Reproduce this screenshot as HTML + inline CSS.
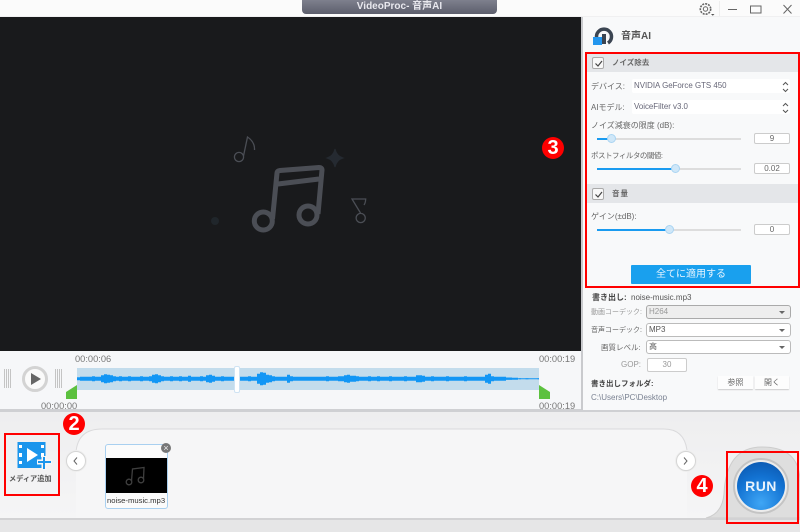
<!DOCTYPE html>
<html lang="ja"><head><meta charset="utf-8"><style>
html,body{margin:0;padding:0}
body{width:800px;height:532px;position:relative;overflow:hidden;background:#f0f0f1;font-family:"Liberation Sans","Noto Sans CJK JP",sans-serif;color:#555}
.a{position:absolute;white-space:nowrap}
.t{position:absolute;white-space:nowrap;font-size:8px;line-height:10px;color:#666}
.tm{position:absolute;white-space:nowrap;font-size:9.3px;line-height:10px;color:#777}
.sel{position:absolute;left:632px;width:158px;height:14px;background:#fff;border-radius:2px;font-size:7.9px;line-height:14px;color:#667;text-indent:2px}
.trk{position:absolute;left:597px;width:144px;height:2px;background:#ddd}
.fill{position:absolute;left:597px;height:2px;background:#1a9bf0}
.kn{position:absolute;width:7px;height:7px;border-radius:50%;background:#cfe7f8;border:1px solid #a9d4f2}
.val{position:absolute;left:754px;width:34px;height:9px;border:1px solid #ccc;border-radius:2px;background:#fff;font-size:8px;line-height:9px;text-align:center;color:#666}
.hd{position:absolute;left:587px;width:211px;height:19px;background:#e4e6e9}
.cb{position:absolute;left:592px;width:10px;height:10px;border:1px solid #aaa;border-radius:2px;background:#f8f8f8}
.dd{position:absolute;left:646px;width:143px;height:12px;border:1px solid #bbb;border-radius:3px;background:#fff;font-size:8px;line-height:12px;text-indent:2px;color:#555}
.dd:after{content:"";position:absolute;right:5px;top:5px;border:3px solid transparent;border-top:3px solid #666;border-bottom:0}
.red{position:absolute;border:2px solid #f00;box-sizing:border-box}
.num{position:absolute;width:22px;height:22px;border-radius:50%;background:#f00;color:#fff;font-weight:bold;font-size:20px;line-height:22px;text-align:center}
.gr{position:absolute;width:8px;height:19px;background-image:linear-gradient(90deg,#c4c4c4 1px,transparent 1px),linear-gradient(#f6f7f9 1px,transparent 1px);background-size:2px 2px}
</style></head><body>
<!-- top bar -->
<div class="a" style="left:0;top:0;width:800px;height:16px;background:#fbfbfb"></div>
<div class="a" style="left:302px;top:0;width:195px;height:14px;background:linear-gradient(#7e808d,#5c5e6c);border-radius:0 0 4px 4px;color:#e8e8ee;font-weight:bold;font-size:10px;line-height:14px;text-align:center">VideoProc- 音声AI</div>
<svg class="a" style="left:698px;top:1px" width="102" height="15" viewBox="0 0 102 15" fill="none" stroke="#666">
<circle cx="7.5" cy="8" r="2.2"/><circle cx="7.5" cy="8" r="5.2" stroke-dasharray="2 1" stroke-width="1.6"/><path d="M13 13h3.500l-1.700 1.700z" fill="#555" stroke="none"/>
<path d="M21.500 0v15" stroke="#eee"/>
<path d="M30 8.500h9" stroke-width="1"/><rect x="52.500" y="5" width="10.500" height="7"/><path d="M85.500 4l8 8.500M93.500 4l-8 8.500"/>
</svg>
<!-- video -->
<div class="a" style="left:0;top:17px;width:581px;height:334px;background:#191a1c"></div>
<svg class="a" style="left:200px;top:120px" width="190" height="130" viewBox="0 0 190 130" fill="none" stroke="#4b4e55">
<g stroke-width="5"><circle cx="63.300" cy="101" r="9"/><circle cx="108" cy="95" r="9"/><path d="M72.500 99L77 53Q77 51 80 50.500L119 47.500Q122 47.500 122 50L118 94M78 64L119 59"/></g>
<g stroke-width="1.300"><circle cx="39" cy="37" r="4.600"/><path d="M43.500 36L47.500 17Q55 22 54.500 30"/><circle cx="160.700" cy="98" r="4.600"/><path d="M160.500 93L152 79H165.700Q165.500 83 164 85"/></g>
<path d="M135 29Q136.500 36 143 38Q136.500 40 135 47Q133.500 40 127 38Q133.500 36 135 29Z" fill="#252a31" stroke="#252a31" stroke-width="1"/><circle cx="15" cy="101" r="4" fill="#20262b" stroke="none"/>
</svg>
<!-- timeline -->
<div class="a" style="left:0;top:351px;width:581px;height:58px;background:#f6f7f9"></div>
<div class="gr" style="left:4px;top:369px"></div>
<div class="gr" style="left:55px;top:369px"></div>
<div class="a" style="left:22px;top:366px;width:20px;height:20px;border:3px solid #d3d3d3;border-radius:50%;background:#fafafa"></div>
<div class="a" style="left:31px;top:373px;border-left:10px solid #666;border-top:6px solid transparent;border-bottom:6px solid transparent"></div>
<div class="tm" style="left:75px;top:354px">00:00:06</div>
<div class="tm" style="left:539px;top:354px">00:00:19</div>
<div class="tm" style="left:41px;top:401px">00:00:00</div>
<div class="tm" style="left:539px;top:401px">00:00:19</div>
<div class="a" style="left:77px;top:368px;width:462px;height:22px;background:#c3dcec"></div>
<svg class="a" style="left:77px;top:368px" width="462" height="22" viewBox="0 0 462 22"><path fill="none" stroke="#1296f5" stroke-width="3" d="M1.500 9.200v3M4.500 8.700v4M7.500 8.700v4M10.500 8.700v4M13.500 8.700v4M16.500 8.200v5M19.500 8.700v4M22.500 8.700v4M25.500 7.200v7M28.500 6.200v9M31.500 6.700v8M34.500 7.200v7M37.500 8.200v5M40.500 8.700v4M43.500 8.200v5M46.500 8.700v4M49.500 8.700v4M52.500 8.200v5M55.500 8.700v4M58.500 8.700v4M61.500 8.700v4M64.500 8.200v5M67.500 8.700v4M70.500 8.700v4M73.500 8.200v5M76.500 6.700v8M79.500 6.200v9M82.500 7.200v7M85.500 8.200v5M88.500 8.700v4M91.500 8.700v4M94.500 8.200v5M97.500 8.700v4M100.500 8.700v4M103.500 8.200v5M106.500 8.700v4M109.500 8.700v4M112.500 7.700v6M115.500 8.700v4M118.500 8.700v4M121.500 8.700v4M124.500 8.200v5M127.500 8.700v4M130.500 7.200v7M133.500 6.700v8M136.500 7.700v6M139.500 8.700v4M142.500 8.700v4M145.500 8.200v5M148.500 8.700v4M151.500 8.700v4M154.500 8.700v4M157.500 8.700v4M160.500 7.700v6M163.500 8.700v4M166.500 8.700v4M169.500 8.700v4M172.500 8.200v5M175.500 8.700v4M178.500 8.700v4M181.500 5.700v10M184.500 4.200v13M187.500 4.700v12M190.500 6.700v8M193.500 7.200v7M196.500 8.200v5M199.500 8.700v4M202.500 8.700v4M205.500 8.700v4M208.500 8.700v4M211.500 6.700v8M214.500 8.200v5M217.500 8.700v4M220.500 8.700v4M223.500 8.700v4M226.500 8.700v4M229.500 8.700v4M232.500 8.700v4M235.500 8.700v4M238.500 8.700v4M241.500 8.700v4M244.500 8.700v4M247.500 8.700v4M250.500 8.200v5M253.500 8.700v4M256.500 8.700v4M259.500 8.700v4M262.500 8.200v5M265.500 8.200v5M268.500 7.200v7M271.500 6.700v8M274.500 7.700v6M277.500 7.700v6M280.500 8.200v5M283.500 8.700v4M286.500 8.700v4M289.500 8.700v4M292.500 8.200v5M295.500 8.700v4M298.500 8.700v4M301.500 8.200v5M304.500 8.700v4M307.500 8.700v4M310.500 8.700v4M313.500 8.200v5M316.500 8.700v4M319.500 8.700v4M322.500 8.700v4M325.500 8.700v4M328.500 8.200v5M331.500 8.700v4M334.500 8.700v4M337.500 8.700v4M340.500 7.200v7M343.500 7.200v7M346.500 7.700v6M349.500 8.700v4M352.500 8.700v4M355.500 8.200v5M358.500 8.700v4M361.500 8.700v4M364.500 8.700v4M367.500 8.700v4M370.500 8.200v5M373.500 8.700v4M376.500 8.700v4M379.500 8.700v4M382.500 8.700v4M385.500 8.700v4M388.500 8.200v5M391.500 8.700v4M394.500 8.700v4M397.500 8.700v4M400.500 8.700v4M403.500 8.700v4M406.500 8.700v4M409.500 6.700v8M412.500 5.700v10M415.500 8.200v5M418.500 8.700v4M421.500 8.700v4M424.500 8.700v4M427.500 8.700v4M430.500 9.500v2.400M433.500 9.500v2.400M436.500 9.700v2M439.500 9.700v2M442.500 10.200v1M450 10.200v1M462 10.200v1"/><path d="M442 10.700h20" stroke="#1296f5" stroke-width="1"/></svg>
<div class="a" style="left:234px;top:366px;width:4px;height:25px;background:#fff;border:1px solid #cfe3f3;border-radius:2px"></div>
<svg class="a" style="left:66px;top:385px" width="484" height="15" viewBox="0 0 484 15"><path fill="#5cc13f" d="M0 14V7L11 0V14ZM473 0L484 7V14H473Z"/></svg>
<div class="a" style="left:0;top:409px;width:581px;height:2px;background:#cfd0d3"></div>
<!-- right panel -->
<div class="a" style="left:581px;top:17px;width:2px;height:393px;background:#c9cacd"></div>
<div class="a" style="left:583px;top:17px;width:217px;height:393px;background:#f8f9fa"></div>
<svg class="a" style="left:593px;top:26px" width="22" height="20" viewBox="0 0 22 20"><path fill="none" stroke="#3b4552" stroke-width="3.500" d="M7 17A7.500 7.500 0 1 1 15 17"/><path fill="#3b4552" d="M9 8h4v10H9z"/><rect x="0" y="11" width="9" height="8" fill="#2396ee"/></svg>
<div class="a" style="left:621px;top:30px;font-size:10px;font-weight:bold;line-height:13px;color:#555">音声AI</div>
<div class="hd" style="top:53px"></div>
<div class="cb" style="left:592px;top:57px"></div>
<svg class="a" style="left:595px;top:60px" width="8" height="7" viewBox="0 0 8 7"><path d="M0.500 3.500L3 6L7 1" fill="none" stroke="#444" stroke-width="1.200"/></svg>
<div class="t" style="left:612px;top:58px;font-weight:bold;font-size:7.5px">ノイズ除去</div>
<div class="t" style="left:591px;top:82px">デバイス:</div>
<div class="sel" style="top:79px">NVIDIA GeForce GTS 450</div>
<div class="t" style="left:591px;top:103px">AIモデル:</div>
<div class="sel" style="top:100px">VoiceFilter v3.0</div>
<svg class="a" style="left:782px;top:81px" width="7" height="32" viewBox="0 0 7 32" fill="none" stroke="#555"><path d="M1 4L3.500 1.500L6 4M1 8L3.500 10.500L6 8M1 25L3.500 22.500L6 25M1 29L3.500 31.500L6 29"/></svg>
<div class="t" style="left:591px;top:121px">ノイズ減衰の限度 (dB):</div>
<div class="trk" style="top:138px"></div><div class="fill" style="top:138px;width:14px"></div><div class="kn" style="left:607px;top:134px"></div>
<div class="val" style="top:133px">9</div>
<div class="t" style="left:591px;top:151px;font-size:7.5px;letter-spacing:-.5px">ポストフィルタの閾値:</div>
<div class="trk" style="top:168px"></div><div class="fill" style="top:168px;width:79px"></div><div class="kn" style="left:671px;top:164px"></div>
<div class="val" style="top:163px">0.02</div>
<div class="hd" style="top:184px"></div>
<div class="cb" style="left:592px;top:188px"></div>
<svg class="a" style="left:595px;top:191px" width="8" height="7" viewBox="0 0 8 7"><path d="M0.500 3.500L3 6L7 1" fill="none" stroke="#444" stroke-width="1.200"/></svg>
<div class="t" style="left:612px;top:189px;font-weight:bold;font-size:7.5px;letter-spacing:1px">音量</div>
<div class="t" style="left:591px;top:212px">ゲイン(±dB):</div>
<div class="trk" style="top:229px"></div><div class="fill" style="top:229px;width:72px"></div><div class="kn" style="left:665px;top:225px"></div>
<div class="val" style="top:224px">0</div>
<div class="a" style="left:631px;top:265px;width:120px;height:19px;background:#19a0ee;color:#e8f5ff;font-size:10px;line-height:19px;text-align:center;border-radius:1px">全てに適用する</div>
<div class="red" style="left:585px;top:52px;width:215px;height:236px"></div>
<div class="num" style="left:542px;top:137px">3</div>
<!-- export -->
<div class="t" style="left:592px;top:293px;font-weight:bold;color:#444">書き出し:</div>
<div class="t" style="left:631px;top:293px;color:#555">noise-music.mp3</div>
<div class="t" style="left:591px;top:308px;color:#999;font-size:7px">動画コーデック:</div>
<div class="dd" style="top:305px;background:#eee;color:#999;border-color:#aaa">H264</div>
<div class="t" style="left:591px;top:326px;font-size:7px">音声コーデック:</div>
<div class="dd" style="top:323px">MP3</div>
<div class="t" style="left:601px;top:343px;font-size:7.5px">画質レベル:</div>
<div class="dd" style="top:340px">高</div>
<div class="t" style="left:621px;top:360px;color:#999">GOP:</div>
<div class="a" style="left:647px;top:358px;width:38px;height:12px;border:1px solid #ccc;border-radius:2px;background:#fff;font-size:8px;line-height:12px;text-align:center;color:#999">30</div>
<div class="t" style="left:591px;top:379px;font-weight:bold;color:#444;font-size:7.5px">書き出しフォルダ:</div>
<div class="a" style="left:718px;top:376px;width:35px;height:13px;background:#fdfdfd;box-shadow:0 1px 1px #ccc;font-size:8px;line-height:13px;text-align:center;color:#666">参照</div>
<div class="a" style="left:755px;top:376px;width:34px;height:13px;background:#fdfdfd;box-shadow:0 1px 1px #ccc;font-size:8px;line-height:13px;text-align:center;color:#666">開く</div>
<div class="t" style="left:591px;top:393px;color:#7a8292">C:\Users\PC\Desktop</div>
<div class="a" style="left:0;top:410px;width:800px;height:2px;background:#cfd0d3"></div>
<!-- bottom -->
<div class="a" style="left:0;top:412px;width:800px;height:106px;background:linear-gradient(#eeeeef,#f5f5f6)"></div>
<div class="a" style="left:0;top:518px;width:800px;height:14px;background:#e6e6e7;border-top:2px solid #d2d2d4;box-sizing:border-box"></div>
<svg class="a" style="left:0;top:412px" width="800" height="106" viewBox="0 412 800 106">
<path d="M76 452Q78 429 102 429H664Q684 429 687 450V518H76Z" fill="#f6f6f7"/>
<path d="M76 452Q78 429 102 429H664Q684 429 687 450" fill="none" stroke="#dadadc"/>
<path d="M706 518Q722 514 724 494Q726 447 762 447Q800 447 800 482V518Z" fill="#dedede" stroke="#cdcdcd"/>
</svg>
<div class="red" style="left:4px;top:433px;width:56px;height:63px"></div>
<svg class="a" style="left:16px;top:440px" width="37" height="33" viewBox="0 0 37 33"><path fill="#1a95ec" d="M1.500 2H29.500V28H1.500Z"/><path fill="#fff" d="M3 5h3v3H3zM3 13h3v4H3zM3 21h3v3H3zM25 5h3v3h-3zM25 13h3v4h-3z"/><path fill="#fff" d="M11 8L22 15L11 22Z"/><path stroke="#f6f6f7" stroke-width="5" d="M28 16v14M21 22h15"/><path stroke="#1a95ec" stroke-width="2" d="M28 17v12M22 22h13"/></svg>
<div class="t" style="left:9px;top:474px;font-weight:bold;color:#555;font-size:7.2px">メディア追加</div>
<div class="num" style="left:63px;top:413px">2</div>
<div class="a" style="left:66px;top:451px;width:18px;height:18px;border:1px solid #d5d5d5;border-radius:50%;background:#fff;box-shadow:0 0 0 1px #eee"></div>
<svg class="a" style="left:72px;top:456px" width="8" height="10" viewBox="0 0 8 10"><path d="M5 1.500L2 5L5 8.500" fill="none" stroke="#666"/></svg>
<div class="a" style="left:676px;top:451px;width:18px;height:18px;border:1px solid #d5d5d5;border-radius:50%;background:#fff;box-shadow:0 0 0 1px #eee"></div>
<svg class="a" style="left:682px;top:456px" width="8" height="10" viewBox="0 0 8 10"><path d="M2 1.500L5 5L2 8.500" fill="none" stroke="#666"/></svg>
<div class="a" style="left:105px;top:444px;width:63px;height:65px;border:1px solid #a9d0f0;border-radius:3px;background:#fbfbfb;box-sizing:border-box"></div>
<div class="a" style="left:106px;top:458px;width:61px;height:35px;background:#000"></div>
<svg class="a" style="left:123px;top:465px" width="24" height="22" viewBox="0 0 24 22" fill="none" stroke="#3f3f3f" stroke-width="1.300"><circle cx="6" cy="17" r="2.800"/><circle cx="18" cy="15" r="2.800"/><path d="M8.500 16L9.500 4L21 2.500L20.500 14"/></svg>
<div class="a" style="left:107px;top:495px;font-size:7.7px;line-height:11px;color:#333">noise-music.mp3</div>
<div class="a" style="left:161px;top:443px;width:10px;height:10px;border-radius:50%;background:#777;color:#eee;font-size:9px;line-height:10px;text-align:center">×</div>
<div class="num" style="left:691px;top:475px">4</div>
<div class="a" style="left:733px;top:458px;width:56px;height:56px;border-radius:50%;background:#ececec;border:2px solid #c4c4c4;box-sizing:border-box"></div>
<div class="a" style="left:737px;top:462px;width:48px;height:48px;border-radius:50%;background:radial-gradient(circle at 50% 85%,#3fa6f5,#1272d2 55%,#0a52a8);color:#e9f3fc;font-weight:bold;font-size:14px;letter-spacing:.5px;line-height:48px;text-align:center">RUN</div>
<div class="red" style="left:726px;top:451px;width:73px;height:73px"></div>
</body></html>
